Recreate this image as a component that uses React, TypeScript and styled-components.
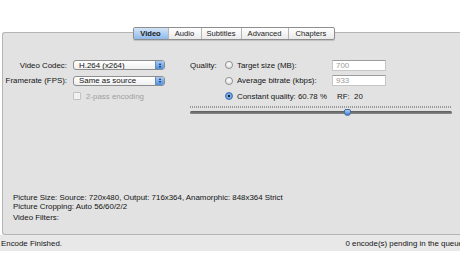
import React from "react";
import styled, { createGlobalStyle } from "styled-components";

const GlobalStyle = createGlobalStyle`
  html, body {
    margin: 0;
    padding: 0;
    background: #ffffff;
  }
  body {
    font-family: "Liberation Sans", Arial, sans-serif;
    font-size: 7.9px;
    color: #141414;
  }
`;

const Window = styled.div`
  width: 460px;
  height: 272px;
  overflow: hidden;
  display: flex;
  flex-direction: column;
  background: #ffffff;
`;

const Panel = styled.div`
  margin: 32px 0 0 2px;
  width: 462px;
  height: 203px;
  box-sizing: border-box;
  border: 1px solid #b4b4b4;
  border-right: none;
  border-radius: 3px 0 0 3px;
  background: #e2e2e2;
  display: flex;
  flex-direction: column;
`;

const TabStrip = styled.div`
  align-self: center;
  margin-top: -6px;
  display: flex;
  height: 11px;
  border: 1px solid #8e8e8e;
  border-radius: 2px;
  background: linear-gradient(#ffffff, #e9e9e9);
  box-shadow: 0 1px 1px rgba(0, 0, 0, 0.15);
`;

const Tab = styled.div<{ $active?: boolean; $w: number }>`
  width: ${(p) => p.$w}px;
  display: flex;
  align-items: center;
  justify-content: center;
  font-size: 7.6px;
  color: #1a1a1a;
  box-sizing: border-box;
  border-left: 1px solid #b5b5b5;
  &:first-child {
    border-left: none;
  }
  ${(p) =>
    p.$active &&
    `
    background: linear-gradient(#d3e5f8, #8fb9ea);
    font-weight: bold;
  `}
`;

const Top = styled.div`
  display: flex;
  margin-top: 20px;
`;

const LeftGrid = styled.div`
  display: grid;
  grid-template-columns: 64px 92px;
  grid-auto-rows: 10px;
  column-gap: 6px;
  row-gap: 5.5px;
  align-items: center;
`;

const Label = styled.div`
  text-align: right;
  white-space: nowrap;
`;

const Popup = styled.div`
  height: 10px;
  box-sizing: border-box;
  border: 1px solid #8d8d8d;
  border-radius: 3px;
  background: linear-gradient(#ffffff, #efefef);
  display: flex;
  align-items: center;
  padding-left: 5px;
  overflow: hidden;
  white-space: nowrap;
`;

const Stepper = styled.div`
  margin-left: auto;
  width: 8px;
  height: 100%;
  flex-shrink: 0;
  background: linear-gradient(#a9cbf3, #4f8fe0);
  border-left: 1px solid #6a8ab8;
  display: flex;
  flex-direction: column;
  align-items: center;
  justify-content: center;
  gap: 1px;
`;

const Arrow = styled.div<{ $down?: boolean }>`
  width: 0;
  height: 0;
  border-left: 1.5px solid transparent;
  border-right: 1.5px solid transparent;
  ${(p) =>
    p.$down
      ? "border-top: 2px solid #10254a;"
      : "border-bottom: 2px solid #10254a;"}
`;

const CheckRow = styled.div`
  grid-column: 2;
  display: flex;
  align-items: center;
  gap: 5px;
  color: #a0a0a0;
  white-space: nowrap;
`;

const CheckBox = styled.div`
  width: 6px;
  height: 6px;
  border: 1px solid #c2c2c2;
  background: #f1f1f1;
  border-radius: 1px;
`;

const Right = styled.div`
  margin-left: 25px;
  display: flex;
  flex-direction: column;
`;

const QualityGrid = styled.div`
  display: grid;
  grid-template-columns: 35px 107px 54px;
  grid-auto-rows: 10px;
  row-gap: 5.5px;
  align-items: center;
  white-space: nowrap;
`;

const RadioLabel = styled.div`
  display: flex;
  align-items: center;
  gap: 4px;
`;

const Radio = styled.div<{ $on?: boolean }>`
  width: 8px;
  height: 8px;
  flex-shrink: 0;
  box-sizing: border-box;
  border-radius: 50%;
  border: 1px solid ${(p) => (p.$on ? "#3f6fb4" : "#8c8c8c")};
  background: ${(p) =>
    p.$on
      ? "radial-gradient(circle, #0f1d33 0 1.3px, #7fb0ec 1.6px, #4c89d8 100%)"
      : "linear-gradient(#ffffff, #e4e4e4)"};
`;

const Field = styled.div`
  height: 11px;
  box-sizing: border-box;
  border: 1px solid #c6c6c6;
  border-top-color: #9c9c9c;
  background: #ffffff;
  color: #9a9a9a;
  padding-left: 3px;
  display: flex;
  align-items: center;
`;

const RF = styled.div`
  padding-left: 5px;
`;

const Slider = styled.div`
  margin-top: 5px;
  width: 262px;
  display: flex;
  flex-direction: column;
  gap: 3px;
`;

const Ticks = styled.div`
  height: 2px;
  background: repeating-linear-gradient(
    90deg,
    #9a9a9a 0 1px,
    transparent 1px 2px
  );
`;

const Track = styled.div`
  position: relative;
  height: 3px;
  border-radius: 2px;
  background: linear-gradient(#5a5a5a, #8a8a8a);
`;

const Knob = styled.div`
  position: absolute;
  left: 154px;
  top: -2px;
  width: 7px;
  height: 7px;
  border-radius: 2px 2px 50% 50%;
  background: linear-gradient(#a9cdf5, #3d7fd6);
  border: 1px solid #44679b;
  box-sizing: border-box;
`;

const Info = styled.div`
  margin-top: auto;
  padding: 0 0 12px 10px;
  display: flex;
  flex-direction: column;
`;

const InfoLine = styled.div<{ $gap?: number }>`
  line-height: 9px;
  margin-top: ${(p) => p.$gap ?? 0}px;
  white-space: nowrap;
`;

const StatusBar = styled.div`
  height: 16px;
  display: flex;
  align-items: center;
  padding: 0 0 0 1px;
  background: #e8e8e8;
  white-space: nowrap;
  overflow: hidden;
`;

const RightStatus = styled.div`
  margin-left: auto;
  margin-right: -3px;
`;

const tabs = [
  { name: "Video", w: 34, active: true },
  { name: "Audio", w: 33 },
  { name: "Subtitles", w: 40 },
  { name: "Advanced", w: 47 },
  { name: "Chapters", w: 46 },
];

function PopupButton({ text }: { text: string }) {
  return (
    <Popup>
      {text}
      <Stepper>
        <Arrow />
        <Arrow $down />
      </Stepper>
    </Popup>
  );
}

export default function App() {
  return (
    <Window>
      <GlobalStyle />
      <Panel>
        <TabStrip>
          {tabs.map((t) => (
            <Tab key={t.name} $w={t.w} $active={t.active}>
              {t.name}
            </Tab>
          ))}
        </TabStrip>
        <Top>
          <LeftGrid>
            <Label>Video Codec:</Label>
            <PopupButton text="H.264 (x264)" />
            <Label>Framerate (FPS):</Label>
            <PopupButton text="Same as source" />
            <CheckRow>
              <CheckBox />
              2-pass encoding
            </CheckRow>
          </LeftGrid>
          <Right>
            <QualityGrid>
              <div>Quality:</div>
              <RadioLabel>
                <Radio />
                Target size (MB):
              </RadioLabel>
              <Field>700</Field>
              <div />
              <RadioLabel>
                <Radio />
                Average bitrate (kbps):
              </RadioLabel>
              <Field>933</Field>
              <div />
              <RadioLabel>
                <Radio $on />
                Constant quality: 60.78 %
              </RadioLabel>
              <RF>RF:&nbsp; 20</RF>
            </QualityGrid>
            <Slider>
              <Ticks />
              <Track>
                <Knob />
              </Track>
            </Slider>
          </Right>
        </Top>
        <Info>
          <InfoLine>
            Picture Size: Source: 720x480, Output: 716x364, Anamorphic: 848x364 Strict
          </InfoLine>
          <InfoLine>Picture Cropping: Auto 56/60/2/2</InfoLine>
          <InfoLine $gap={2}>Video Filters:</InfoLine>
        </Info>
      </Panel>
      <StatusBar>
        <div>Encode Finished.</div>
        <RightStatus>0 encode(s) pending in the queue</RightStatus>
      </StatusBar>
    </Window>
  );
}
